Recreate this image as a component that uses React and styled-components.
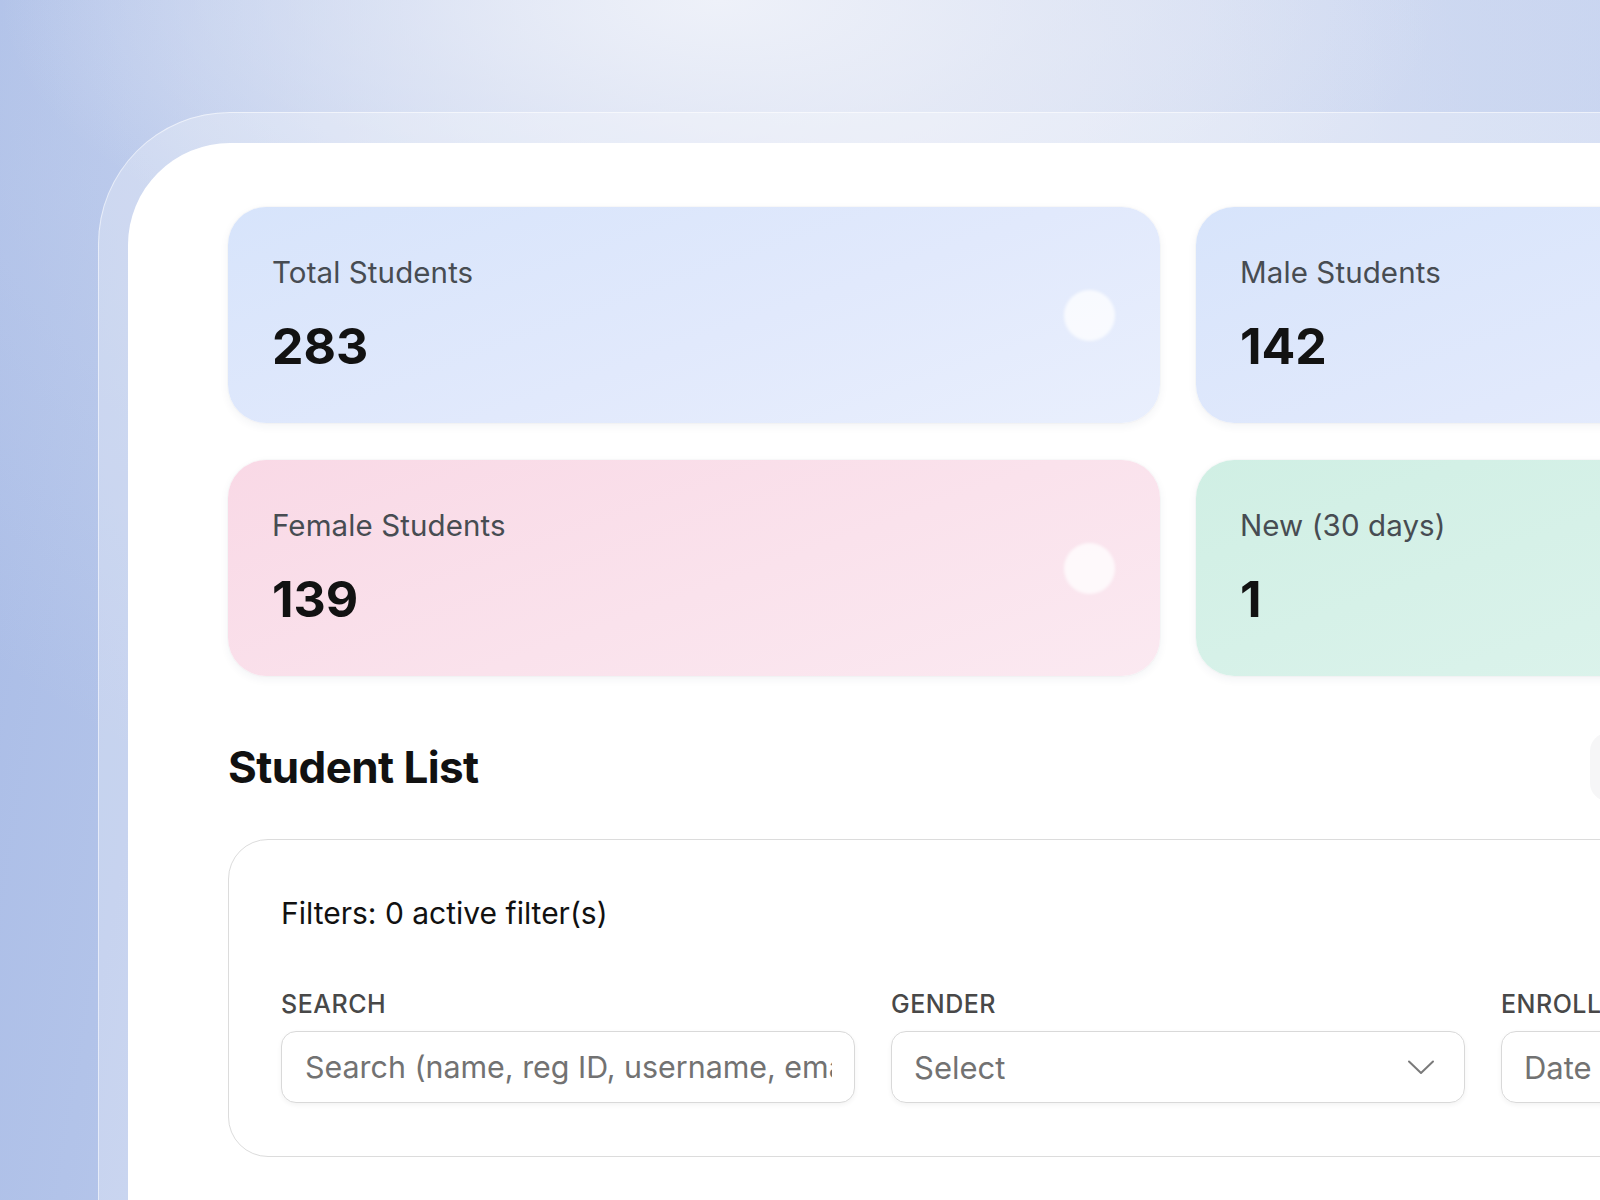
import styled, { createGlobalStyle } from "styled-components";

const GlobalStyle = createGlobalStyle`
  * {
    box-sizing: border-box;
  }

  body {
    margin: 0;
    font-family: Inter, "Liberation Sans", sans-serif;
    color: #111;
  }
`;

const stats = [
  { label: "Total Students", value: "283", tone: "blue" },
  { label: "Male Students", value: "142", tone: "blue" },
  { label: "Female Students", value: "139", tone: "pink" },
  { label: "New (30 days)", value: "1", tone: "green" },
];

const tones = {
  blue: "linear-gradient(160deg, #d7e4fb 0%, #e1e9fc 55%, #e9effd 100%)",
  pink: "linear-gradient(160deg, #f9d9e6 0%, #fae2ec 55%, #fbe9f1 100%)",
  green: "linear-gradient(160deg, #d0efe4 0%, #d9f2ea 55%, #e0f5ee 100%)",
};

const App = () => {
  return (
    <>
      <GlobalStyle />
      <Page>
        <Frame>
          <Panel>
            <StatGrid>
              {stats.map((s) => (
                <StatCard key={s.label} tone={s.tone}>
                  <StatText>
                    <StatLabel>{s.label}</StatLabel>
                    <StatValue>{s.value}</StatValue>
                  </StatText>
                  <Glow />
                </StatCard>
              ))}
            </StatGrid>

            <Header>
              <Title>Student List</Title>
              <AddButton>Add Student</AddButton>
            </Header>

            <FilterBox>
              <FilterTitle>Filters: 0 active filter(s)</FilterTitle>
              <FilterRow>
                <Field>
                  <FieldLabel>Search</FieldLabel>
                  <Input placeholder="Search (name, reg ID, username, email)" />
                </Field>
                <Field>
                  <FieldLabel>Gender</FieldLabel>
                  <SelectBox>
                    <span>Select</span>
                    <svg width="28" height="16" viewBox="0 0 28 16">
                      <path
                        d="M2 2.5 L14 14 L26 2.5"
                        fill="none"
                        stroke="#7a7a7a"
                        strokeWidth="2"
                        strokeLinecap="round"
                        strokeLinejoin="round"
                      />
                    </svg>
                  </SelectBox>
                </Field>
                <Field>
                  <FieldLabel>Enrollment Date</FieldLabel>
                  <SelectBox>
                    <span>Date range</span>
                  </SelectBox>
                </Field>
              </FilterRow>
            </FilterBox>
          </Panel>
        </Frame>
      </Page>
    </>
  );
};

const Page = styled.div`
  width: 1600px;
  height: 1200px;
  overflow: hidden;
  padding: 112px 0 0 98px;
  background:
    radial-gradient(ellipse 45% 26% at 45% 0%, #eef1f9 0%, rgba(232, 236, 247, 0.6) 45%, rgba(232, 236, 247, 0) 100%),
    radial-gradient(ellipse 75% 70% at 55% 8%, #dfe5f4 0%, rgba(210, 220, 242, 0.5) 50%, rgba(210, 220, 242, 0) 100%),
    linear-gradient(100deg, #a8bbe6 0%, #bccbec 30%, #cbd6f0 60%, #c2d0ef 100%);
`;

const Frame = styled.div`
  width: 1700px;
  height: 1200px;
  padding: 30px 0 0 29px;
  border-radius: 132px 0 0 0;
  background: rgba(255, 255, 255, 0.28);
  border-top: 1px solid rgba(255, 255, 255, 0.55);
  border-left: 1px solid rgba(255, 255, 255, 0.55);
`;

const Panel = styled.div`
  height: 100%;
  background: #fff;
  border-radius: 102px 0 0 0;
  padding: 64px 0 0 100px;
`;

const StatGrid = styled.div`
  display: grid;
  grid-template-columns: 932px 932px;
  column-gap: 36px;
  row-gap: 37px;
`;

const StatCard = styled.div`
  height: 216px;
  display: flex;
  align-items: center;
  justify-content: space-between;
  padding: 0 45px 0 44px;
  border-radius: 38px;
  background: ${(props) => tones[props.tone]};
  box-shadow: 0 3px 10px rgba(40, 50, 80, 0.06), 0 0 0 1px rgba(0, 0, 0, 0.02);
`;

const StatText = styled.div`
  display: flex;
  flex-direction: column;
  gap: 26px;
`;

const StatLabel = styled.div`
  font-size: 29.5px;
  line-height: 35px;
  color: #474c52;
  letter-spacing: 0.1px;
`;

const StatValue = styled.div`
  font-size: 50px;
  line-height: 60px;
  font-weight: 700;
  color: #121212;
`;

const Glow = styled.div`
  width: 51px;
  height: 51px;
  border-radius: 50%;
  background: rgba(255, 255, 255, 0.75);
  filter: blur(1.5px);
`;

const Header = styled.div`
  width: 1562px;
  margin-top: 57px;
  height: 68px;
  display: flex;
  align-items: center;
  justify-content: space-between;
`;

const Title = styled.h2`
  margin: 0;
  font-size: 44px;
  font-weight: 700;
  letter-spacing: -0.6px;
  color: #111;
`;

const AddButton = styled.button`
  width: 200px;
  height: 68px;
  border: none;
  border-radius: 18px;
  background: #f6f6f7;
  font-family: inherit;
  font-size: 26px;
  color: #333;
`;

const FilterBox = styled.div`
  margin-top: 38px;
  width: 1900px;
  border: 1.5px solid #dcdcdc;
  border-radius: 40px;
  padding: 55px 52px 53px;
`;

const FilterTitle = styled.div`
  font-size: 30px;
  line-height: 36px;
  color: #111;
`;

const FilterRow = styled.div`
  margin-top: 58px;
  display: grid;
  grid-template-columns: repeat(3, 574px);
  column-gap: 36px;
`;

const Field = styled.div`
  display: flex;
  flex-direction: column;
  gap: 12px;
`;

const FieldLabel = styled.label`
  font-size: 25px;
  line-height: 30px;
  font-weight: 500;
  text-transform: uppercase;
  letter-spacing: 0.5px;
  color: #484848;
  white-space: nowrap;
`;

const Input = styled.input`
  height: 72px;
  width: 100%;
  border: 1.5px solid #d9d9d9;
  border-radius: 15px;
  padding: 0 22px 0 23px;
  font-family: inherit;
  font-size: 30.4px;
  color: #333;
  box-shadow: 0 2px 5px rgba(0, 0, 0, 0.05);
  outline: none;

  &::placeholder {
    color: #727272;
  }
`;

const SelectBox = styled.div`
  height: 72px;
  border: 1.5px solid #d9d9d9;
  border-radius: 15px;
  padding: 0 29px 0 22px;
  display: flex;
  align-items: center;
  justify-content: space-between;
  font-size: 31px;
  color: #727272;
  box-shadow: 0 2px 5px rgba(0, 0, 0, 0.05);
`;

export default App;
